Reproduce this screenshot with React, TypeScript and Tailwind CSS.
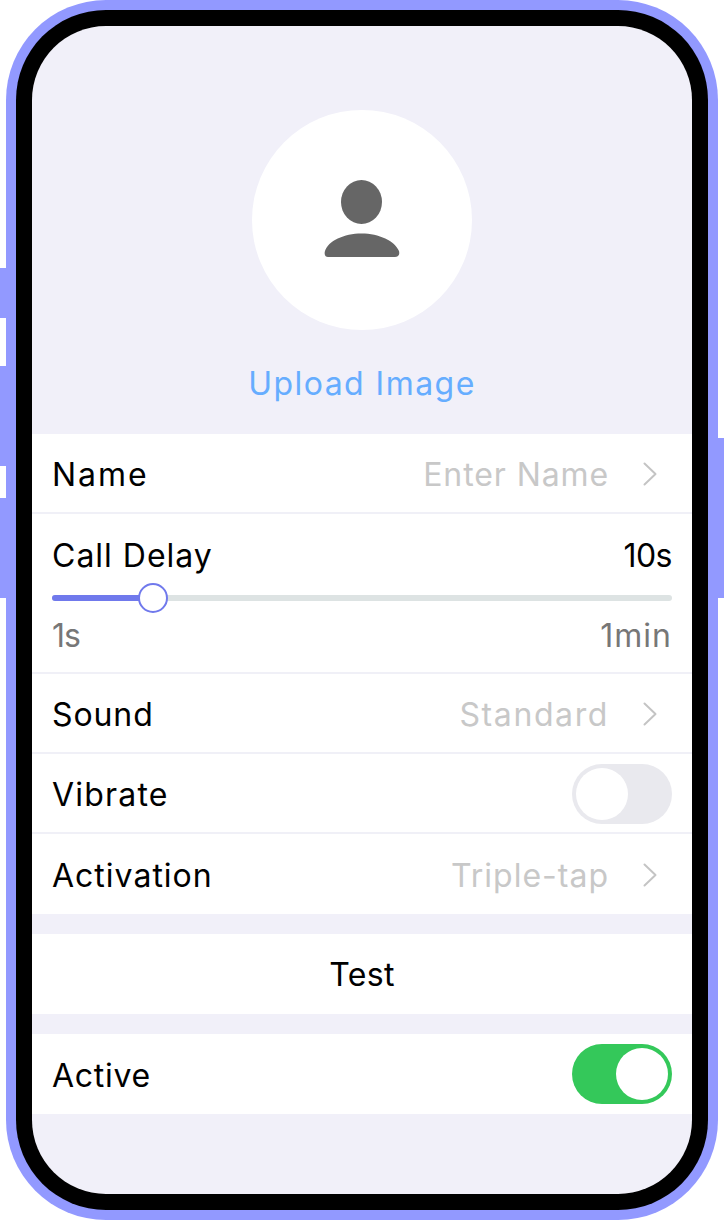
import React from 'react';

const font = "[font-family:Inter,'Liberation_Sans',sans-serif]";

const Chevron = () => (
  <svg width="16" height="26" viewBox="0 0 16 26" fill="none" className="ml-[33px] mr-[34px]">
    <path d="M2.5 2.5 L13.5 13 L2.5 23.5" stroke="#c4c4c4" strokeWidth="2" strokeLinecap="round" strokeLinejoin="round" />
  </svg>
);

const LinkRow = ({ label, value, labelTrack, valueTrack, border = true }: { label: string; value: string; labelTrack: string; valueTrack: string; border?: boolean }) => (
  <div className={`h-[80px] flex items-center justify-between pl-[20px] pt-[2px] bg-white ${border ? 'border-b-2 border-[#f0f0f7]' : ''}`}>
    <span className={`pt-[2px] text-[32px] leading-[40px] text-black ${labelTrack}`}>{label}</span>
    <div className="flex items-center">
      <span className={`pt-[2px] text-[32px] leading-[40px] text-[#c8c8c8] ${valueTrack}`}>{value}</span>
      <Chevron />
    </div>
  </div>
);

export default function App() {
  return (
    <div className={`relative w-[724px] h-[1220px] bg-white px-[6px] ${font}`}>
      {/* side buttons */}
      <div className="absolute left-0 top-[268px] w-[6px] h-[50px] bg-[#9299ff]" />
      <div className="absolute left-0 top-[366px] w-[6px] h-[100px] bg-[#9299ff]" />
      <div className="absolute left-0 top-[498px] w-[6px] h-[100px] bg-[#9299ff]" />
      <div className="absolute right-0 top-[438px] w-[6px] h-[160px] bg-[#9299ff]" />

      <div className="h-full rounded-[100px] bg-[#9299ff] p-[10px]">
        <div className="h-full rounded-[90px] bg-black p-[16px]">
          <div className="h-full rounded-[74px] overflow-hidden bg-[#f1f0f9]">
            <div className="h-[408px] flex flex-col items-center pt-[84px]">
              <div className="w-[220px] h-[220px] rounded-full bg-white flex items-center justify-center">
                <svg width="76" height="80" viewBox="0 0 76 80">
                  <ellipse cx="37.5" cy="22" rx="20.5" ry="22" fill="#666666" />
                  <path d="M1 71 C4 61 20 53.5 37.5 53.5 C55 53.5 71 61 75 71 C76 75 74 77 71 77 L4 77 C1 77 0 74 1 71 Z" fill="#666666" />
                </svg>
              </div>
              <span className="mt-[34px] text-[32px] leading-[40px] tracking-[1.45px] text-[#66adff]">Upload Image</span>
            </div>

            <LinkRow label="Name" value="Enter Name" labelTrack="tracking-[2px]" valueTrack="tracking-[0.9px]" />

            <div className="h-[160px] bg-white px-[20px] pt-[22px] border-b-2 border-[#f0f0f7]">
              <div className="flex justify-between text-[32px] leading-[40px] text-black">
                <span className="tracking-[1px]">Call Delay</span>
                <span className="tracking-[-0.5px]">10s</span>
              </div>
              <div className="relative mt-[19px] h-[6px] rounded-full bg-[#dde3e3]">
                <div className="h-full w-[100px] rounded-full bg-[#7079ec]" />
                <div className="absolute left-[86px] top-[-12px] w-[30px] h-[30px] rounded-full bg-white border-2 border-[#7079ec]" />
              </div>
              <div className="mt-[15px] flex justify-between text-[32px] leading-[40px] text-[#777777]">
                <span className="tracking-[-1px]">1s</span>
                <span className="tracking-[1px]">1min</span>
              </div>
            </div>

            <LinkRow label="Sound" value="Standard" labelTrack="tracking-[0.9px]" valueTrack="tracking-[1.6px]" />

            <div className="h-[80px] flex items-center justify-between px-[20px] pt-[2px] bg-white border-b-2 border-[#f0f0f7]">
              <span className="pt-[2px] text-[32px] leading-[40px] tracking-[1.2px] text-black">Vibrate</span>
              <div className="w-[100px] h-[60px] rounded-full bg-[#e9e9ee] p-[4px] flex justify-start">
                <div className="w-[52px] h-[52px] rounded-full bg-white" />
              </div>
            </div>

            <LinkRow label="Activation" value="Triple-tap" labelTrack="tracking-[1px]" valueTrack="tracking-[1px]" border={false} />

            <div className="mt-[20px] h-[80px] pt-[2px] flex items-center justify-center bg-white">
              <span className="text-[32px] leading-[40px] tracking-[0.3px] text-black">Test</span>
            </div>

            <div className="mt-[20px] h-[80px] flex items-center justify-between px-[20px] bg-white">
              <span className="pt-[4px] text-[32px] leading-[40px] tracking-[0.7px] text-black">Active</span>
              <div className="w-[100px] h-[60px] rounded-full bg-[#34c85a] p-[4px] flex justify-end">
                <div className="w-[52px] h-[52px] rounded-full bg-white" />
              </div>
            </div>
          </div>
        </div>
      </div>
    </div>
  );
}
